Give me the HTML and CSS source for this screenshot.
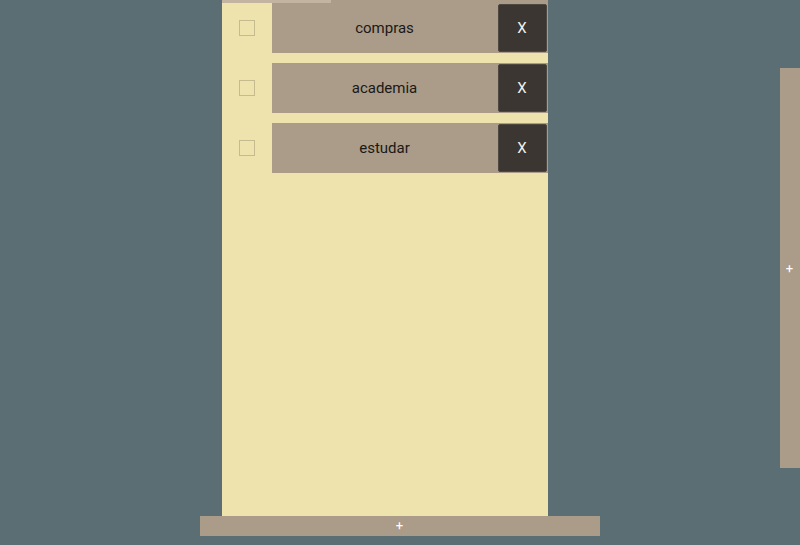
FILE: index.html
```html
<!DOCTYPE html>
<html>
<head>
<meta charset="utf-8">
<link rel="stylesheet" href="styles.css">
</head>
<body>
<div class="board">
  <div class="column">
    <div class="column-top"><div class="column-top-light"></div><div class="column-top-rest"></div></div>
    <div class="items">
      <div class="item">
        <div class="check-cell"><span class="checkbox"></span></div>
        <div class="item-body"><span class="item-label">compras</span><button class="item-remove">X</button></div>
      </div>
      <div class="item">
        <div class="check-cell"><span class="checkbox"></span></div>
        <div class="item-body"><span class="item-label">academia</span><button class="item-remove">X</button></div>
      </div>
      <div class="item">
        <div class="check-cell"><span class="checkbox"></span></div>
        <div class="item-body"><span class="item-label">estudar</span><button class="item-remove">X</button></div>
      </div>
    </div>
  </div>
  <div class="spacer"></div>
  <div class="side-add">+</div>
</div>
<div class="bottom-add">+</div>
</body>
</html>
```
FILE: styles.css
```css
html, body {
  margin: 0;
  padding: 0;
}
body {
  background: #5b6e73;
  font-family: Roboto, "Liberation Sans", sans-serif;
  height: 545px;
  overflow: hidden;
}
.board {
  display: flex;
  height: 516px;
}
.column {
  margin-left: 222px;
  width: 326px;
  background: #eee3ac;
  display: flex;
  flex-direction: column;
}
.column-top {
  display: flex;
  height: 3px;
}
.column-top-light {
  width: 109px;
  background: #c2b4a1;
}
.column-top-rest {
  flex: 1;
  background: #ab9c89;
}
.items {
  display: flex;
  flex-direction: column;
  gap: 10px;
}
.item {
  display: flex;
  height: 50px;
}
.check-cell {
  width: 50px;
  display: flex;
  align-items: center;
  justify-content: center;
}
.checkbox {
  width: 14px;
  height: 14px;
  border: 1px solid #c6ba8f;
  background: #eee3ac;
}
.item-body {
  flex: 1;
  background: #ab9c89;
  display: flex;
  align-items: center;
  padding: 1px 1px 1px 0;
  box-sizing: border-box;
}
.item-label {
  flex: 1;
  text-align: center;
  font-size: 15px;
  color: #1a1917;
  padding-right: 1px;
  padding-bottom: 1px;
}
.item-remove {
  width: 49px;
  height: 48px;
  background: #3b3631;
  border: 1px solid #4e4842;
  border-radius: 2px;
  color: #f2f0ec;
  font-family: Roboto, "Liberation Sans", sans-serif;
  font-size: 15px;
  padding: 0 1px 1px 0;
  margin: 0;
}
.spacer {
  flex: 1;
}
.side-add {
  width: 20px;
  height: 400px;
  margin-top: 68px;
  background: #ab9c89;
  color: #ffffff;
  font-size: 13px;
  display: flex;
  align-items: center;
  justify-content: center;
  padding-right: 1px;
  box-sizing: border-box;
}
.bottom-add {
  margin-left: 200px;
  width: 400px;
  height: 20px;
  background: #ab9c89;
  color: #ffffff;
  font-size: 13px;
  display: flex;
  align-items: center;
  justify-content: center;
  padding: 0 1px 2px 0;
  box-sizing: border-box;
}
```
